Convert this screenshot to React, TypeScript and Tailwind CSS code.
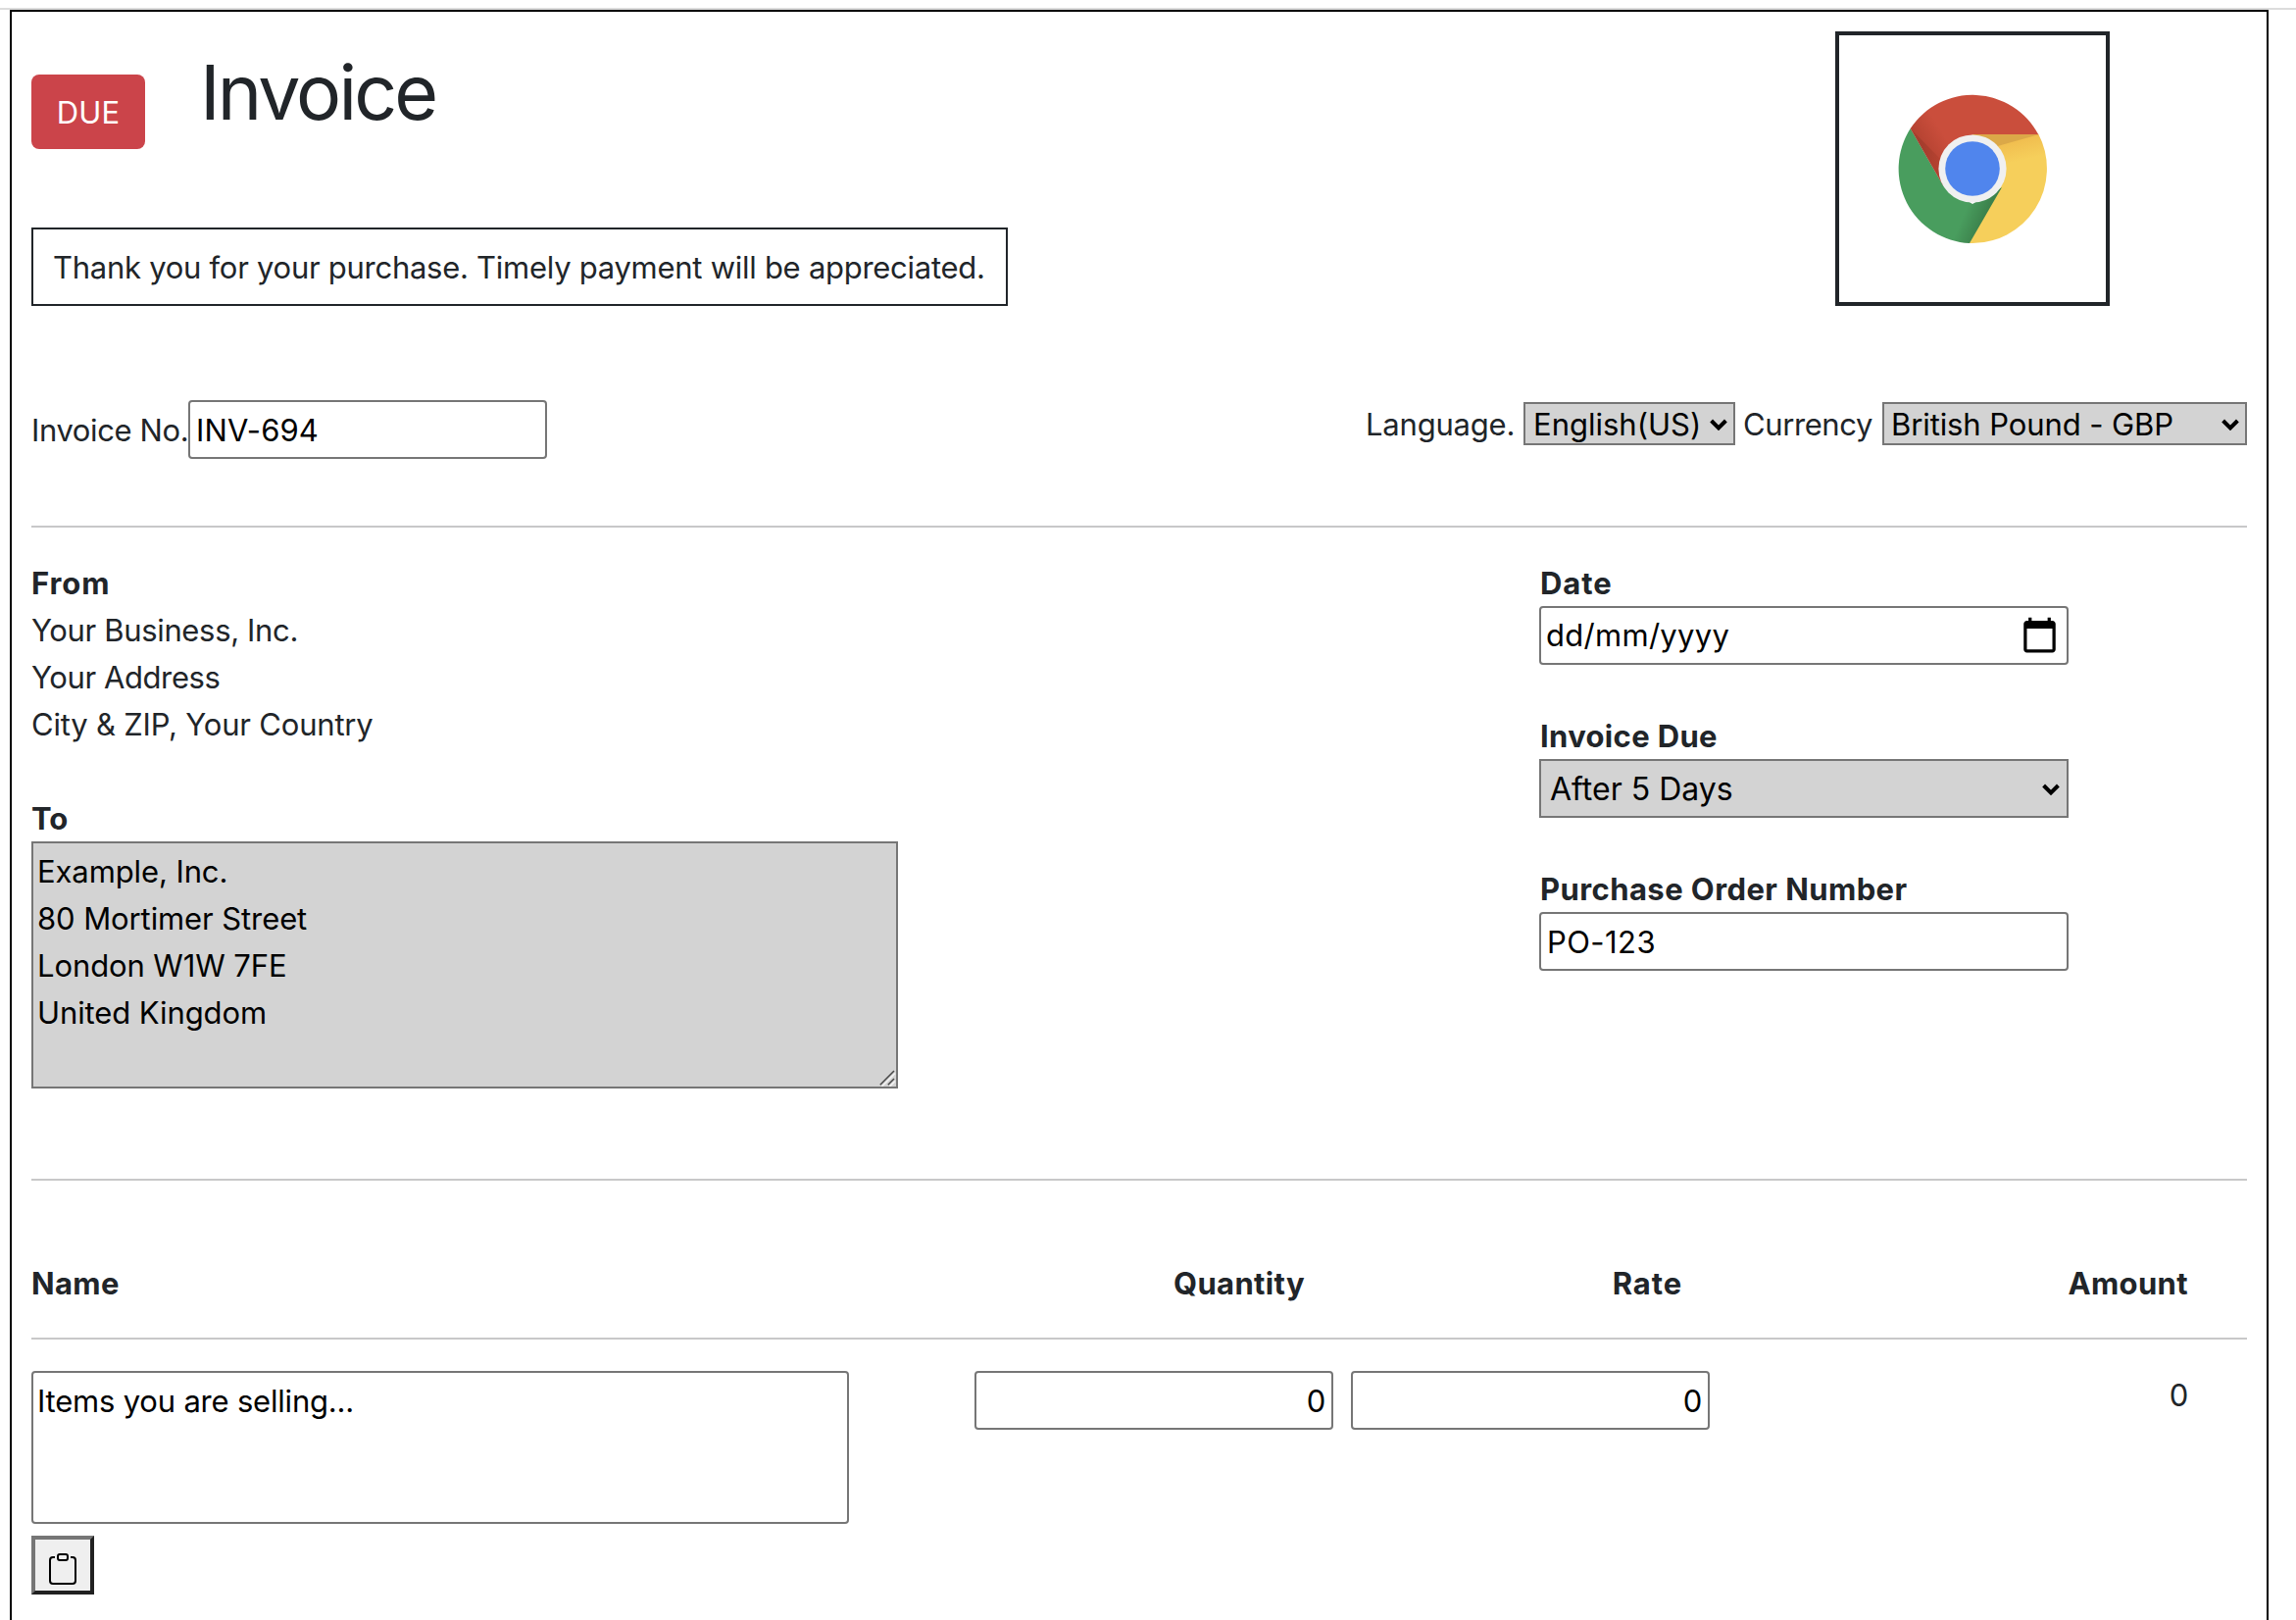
import React from "react";
import { BsClipboard } from "react-icons/bs";

function Chevron({ className }: { className: string }) {
  return (
    <svg viewBox="0 0 18 12" className={`pointer-events-none absolute h-[12px] w-[18px] ${className}`} fill="none">
      <path d="M1.6 2 L9 9.4 L16.4 2" stroke="#000" strokeWidth="4" />
    </svg>
  );
}

function Logo() {
  return (
    <svg viewBox="0 0 152 152" className="h-[152px] w-[152px]">
      <defs>
        <linearGradient id="redShade" gradientUnits="userSpaceOnUse" x1="16" y1="50" x2="42" y2="34">
          <stop offset="0" stopColor="#b0402f" />
          <stop offset="1" stopColor="#ca4e3c" />
        </linearGradient>
        <linearGradient id="redDeep" gradientUnits="userSpaceOnUse" x1="24" y1="60" x2="42" y2="64">
          <stop offset="0" stopColor="#9a3a2a" />
          <stop offset="1" stopColor="#b03f2e" />
        </linearGradient>
        <linearGradient id="yellowShade" gradientUnits="userSpaceOnUse" x1="118" y1="42" x2="124" y2="68">
          <stop offset="0" stopColor="#efb94c" />
          <stop offset="1" stopColor="#f6cf5b" />
        </linearGradient>
        <linearGradient id="greenShade" gradientUnits="userSpaceOnUse" x1="89" y1="124" x2="70" y2="116">
          <stop offset="0" stopColor="#3c824c" />
          <stop offset="1" stopColor="#499d5e" />
        </linearGradient>
      </defs>
      <path d="M143.3 40.8 A76 76 0 0 1 72.6 151.9 L104 95 L76 76 V40.8Z" fill="url(#yellowShade)" />
      <path d="M12.7 35 L46 93 L76 112 L106 95 L73 152 A76 76 0 0 1 12.7 35Z" fill="url(#greenShade)" />
      <path d="M12.7 35 A76 76 0 0 1 143.3 41.3 H76 L46 93Z" fill="url(#redShade)" />
      <path d="M12.7 35 L44 67 L46 93Z" fill="url(#redDeep)" opacity="0.6" />
      <path d="M76 41.3 H143.3 L98 54Z" fill="#dba848" />
      <circle cx="76" cy="76" r="34.6" fill="#f0f0f0" />
      <circle cx="76" cy="76" r="27.8" fill="#5085ed" />
    </svg>
  );
}

function CalendarIcon() {
  return (
    <svg viewBox="0 0 24 24" className="-mt-[2px] h-[39px] w-[39px]" fill="#000">
      <path d="M20 3h-1V1h-2v2H7V1H5v2H4c-1.1 0-2 .9-2 2v16c0 1.1.9 2 2 2h16c1.1 0 2-.9 2-2V5c0-1.1-.9-2-2-2zm0 18H4V8h16v13z" />
    </svg>
  );
}

function ResizeGrip() {
  return (
    <svg viewBox="0 0 17 17" className="absolute right-[2px] bottom-[2px] h-[17px] w-[17px]" fill="none">
      <path d="M2.5 17 L16 3.5 M10.5 17 L16 11.5" stroke="#f2f2f2" strokeWidth="1.6" />
      <path d="M0.8 15.2 L15 1 M8.8 15.2 L15 9" stroke="#484848" strokeWidth="1.5" />
    </svg>
  );
}

function Rule({ className }: { className: string }) {
  return <div className={`h-[2px] shrink-0 bg-[#c8c8c9] ${className}`} />;
}

export default function App() {
  return (
    <div className="flex h-[1652px] w-[2342px] flex-col overflow-hidden bg-white pt-2 font-['Inter',sans-serif] text-[31px] leading-[48px] tracking-[-0.2px] text-[#212529]">
      <div className="h-[2px] shrink-0 bg-[#dcdcdc]" />
      <div className="ml-[10px] flex w-[2304px] grow flex-col border-2 border-b-0 border-black px-5">
        <header className="flex h-[300px] shrink-0 justify-between">
          <div className="flex flex-col justify-between">
            <div className="flex items-start">
              <div className="mt-16 flex h-[76px] w-[116px] items-center justify-center rounded-[8px] bg-[#cb444a] pt-[2px] tracking-[0.2px] text-white">
                DUE
              </div>
              <h1 className="mt-[34px] ml-[56px] text-[77px] leading-[96px] font-normal tracking-[-2.9px]">Invoice</h1>
            </div>
            <div className="flex h-[80px] w-[996px] items-center border-2 border-[#212529] pt-px pl-5 tracking-[-0.27px] whitespace-nowrap">
              Thank you for your purchase. Timely payment will be appreciated.
            </div>
          </div>
          <div className="mt-5 mr-[140px] flex h-[280px] w-[280px] items-center justify-center border-4 border-[#212529]">
            <Logo />
          </div>
        </header>

        <section className="mt-24 flex h-[60px] shrink-0 items-start justify-between">
          <div className="flex items-center">
            <label className="w-[160px] pt-px tracking-[-0.38px] whitespace-nowrap">Invoice No.</label>
            <input
              defaultValue="INV-694"
              className="h-[60px] w-[366px] rounded-[4px] border-2 border-[#767676] bg-white pt-px pl-[6px] tracking-[0.1px] text-black"
            />
          </div>
          <div className="mt-[2px] flex h-[44px] items-center">
            <label className="w-[161px] pt-px tracking-[-0.2px]">Language.</label>
            <div className="relative">
              <select className="block h-[44px] w-[216px] appearance-none border-2 border-[#767676] bg-[#d3d3d3] pt-px pl-2 leading-[38px] tracking-[0px] text-black">
                <option>English(US)</option>
              </select>
              <Chevron className="top-[17px] right-[8px]" />
            </div>
            <label className="ml-[8px] w-[142px] pt-px tracking-[-0.4px]">Currency</label>
            <div className="relative">
              <select className="block h-[44px] w-[372px] appearance-none border-2 border-[#767676] bg-[#d3d3d3] pt-px pl-[7px] leading-[38px] tracking-[-0.1px] text-black">
                <option>British Pound - GBP</option>
              </select>
              <Chevron className="top-[17px] right-[8px]" />
            </div>
          </div>
        </section>

        <Rule className="mt-[68px]" />

        <section className="mt-[33px] flex shrink-0 justify-between">
          <div>
            <div className="font-bold tracking-[0.9px]">From</div>
            <div className="tracking-[-0.34px]">Your Business, Inc.</div>
            <div className="tracking-[-0.4px]">Your Address</div>
            <div>City &amp; ZIP, Your Country</div>
            <div className="mt-12 h-[47px] font-bold tracking-[0px]">To</div>
            <div className="relative h-[252px] w-[884px]">
              <textarea
                defaultValue={"Example, Inc.\n80 Mortimer Street\nLondon W1W 7FE\nUnited Kingdom"}
                className="block h-full w-full resize-none border-2 border-[#767676] bg-[#d3d3d3] pt-[5px] pl-[4px] tracking-[-0.1px] text-black"
              />
              <ResizeGrip />
            </div>
          </div>
          <div className="mr-[182px] w-[540px] font-bold tracking-[0.43px]">
            <div className="h-[47px] pl-px tracking-[0.9px]">Date</div>
            <div className="flex h-[60px] items-center justify-between rounded-[4px] border-2 border-[#767676] bg-white pr-[8px] pl-[5px] font-normal text-black">
              <span className="tracking-[0.29px]">dd/mm/yyyy</span>
              <CalendarIcon />
            </div>
            <div className="mt-[49px] h-[47px] pl-px tracking-[0.34px]">Invoice Due</div>
            <div className="relative">
              <select className="block h-[60px] w-[540px] appearance-none border-2 border-[#767676] bg-[#d3d3d3] pt-px pl-[9px] text-[32px] font-normal tracking-[0px] text-black">
                <option>After 5 Days</option>
              </select>
              <Chevron className="top-[25px] right-[9px]" />
            </div>
            <div className="mt-[49px] h-[47px] pl-px">Purchase Order Number</div>
            <input
              defaultValue="PO-123"
              className="block h-[60px] w-[540px] rounded-[4px] border-2 border-[#767676] bg-white pt-px pl-[6px] font-normal text-black"
            />
          </div>
        </section>

        <Rule className="mt-[92px]" />

        <div className="mt-[81px] grid h-[48px] shrink-0 grid-cols-[900px_399px_385px_516px] font-bold tracking-[0.36px]">
          <div>Name</div>
          <div className="text-right">Quantity</div>
          <div className="text-right tracking-[0.9px]">Rate</div>
          <div className="text-right">Amount</div>
        </div>

        <Rule className="mt-[31px]" />

        <div className="mt-8 flex shrink-0 items-start">
          <textarea
            defaultValue="Items you are selling..."
            className="block h-[156px] w-[834px] resize-none rounded-[4px] border-2 border-[#767676] bg-white pt-[5px] pl-[4px] text-black"
          />
          <input
            defaultValue="0"
            className="ml-[128px] h-[60px] w-[366px] rounded-[4px] border-2 border-[#767676] bg-white pt-px pr-[6px] text-right text-black"
          />
          <input
            defaultValue="0"
            className="ml-[18px] h-[60px] w-[366px] rounded-[4px] border-2 border-[#767676] bg-white pt-px pr-[6px] text-right text-black"
          />
          <div className="mt-px w-[488px] text-right">0</div>
        </div>

        <button className="mt-3 flex h-[60px] w-[64px] shrink-0 items-start border-4 border-t-[#767676] border-r-[#212121] border-b-[#212121] border-l-[#767676] bg-[#efefef] pt-[14px] pl-[12px] text-black">
          <BsClipboard className="h-8 w-8" />
        </button>
      </div>
    </div>
  );
}
